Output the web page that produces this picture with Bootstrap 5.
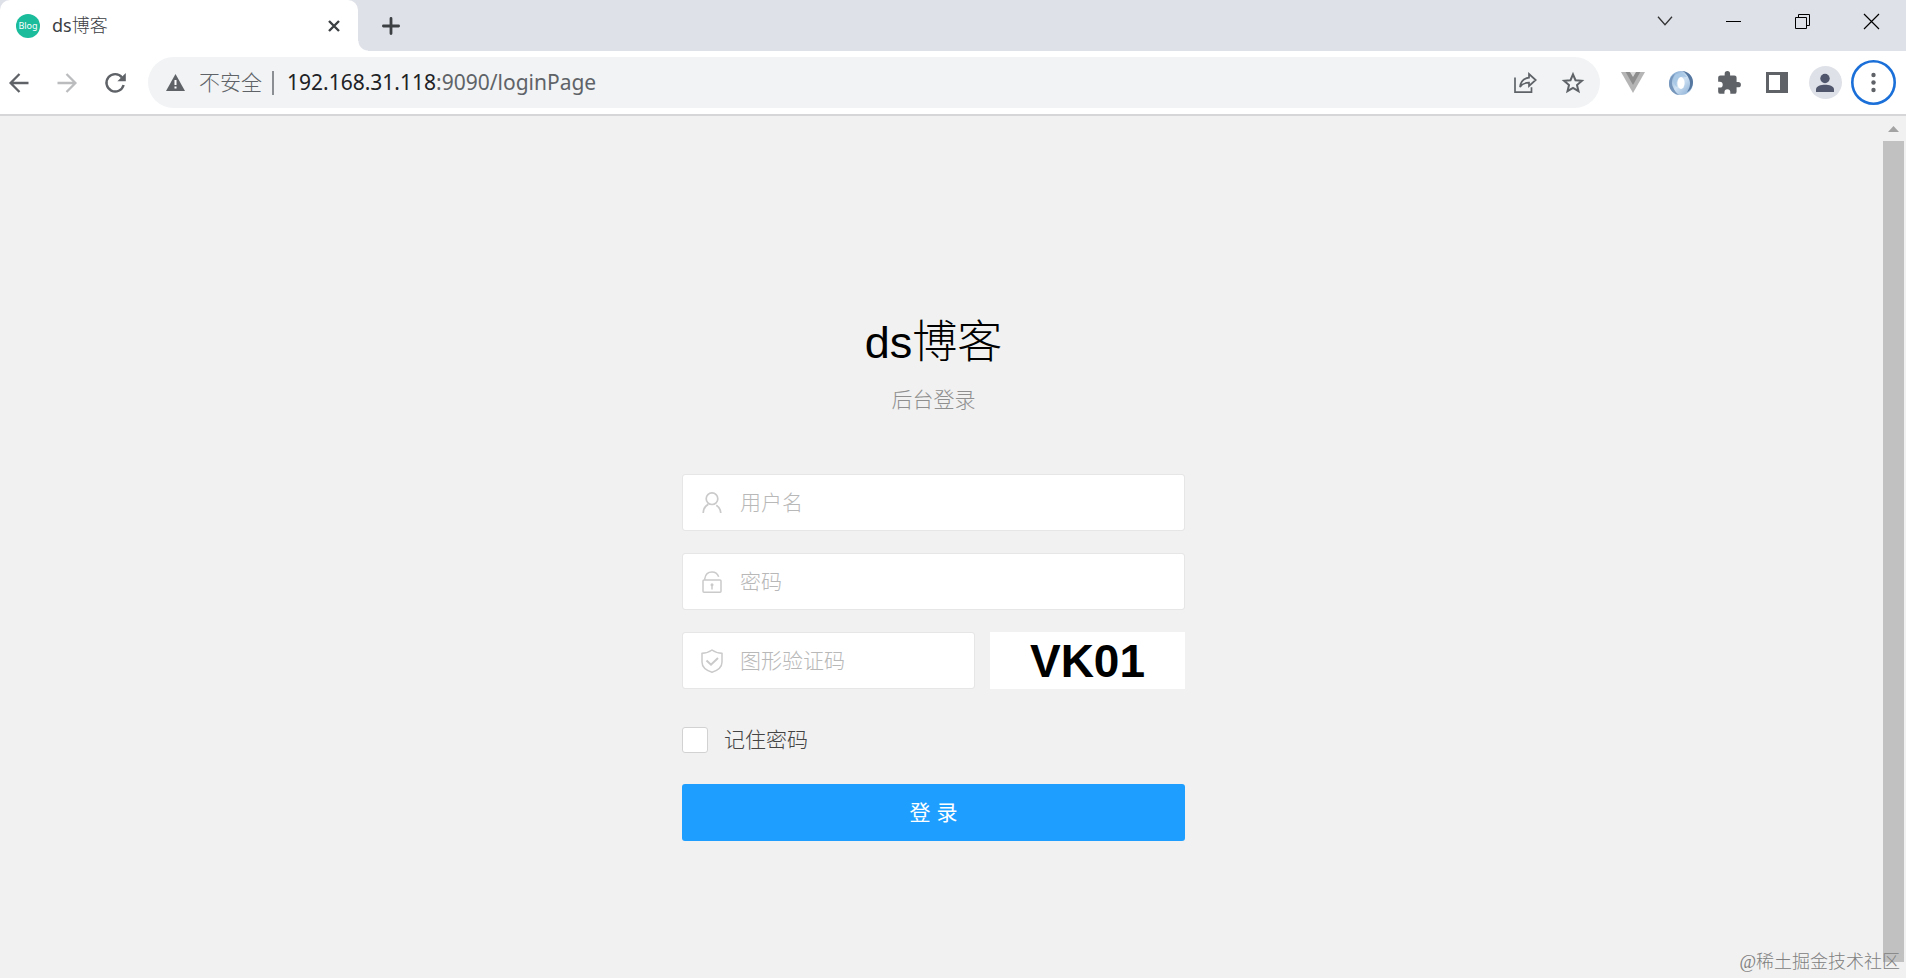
<!DOCTYPE html>
<html lang="zh-CN">
<head>
<meta charset="utf-8">
<meta name="viewport" content="width=device-width, initial-scale=1">
<title>ds博客</title>
<link href="https://cdn.jsdelivr.net/npm/bootstrap@5.3.0/dist/css/bootstrap.min.css" rel="stylesheet">
<style>
  body { font-family: "Liberation Sans", "Noto Sans CJK SC", sans-serif; font-weight: 300; background: #f1f1f1; }
  svg { display: block; flex: none; overflow: visible; }
  .ui-font { font-family: "Noto Sans", "Noto Sans CJK SC", sans-serif; font-weight: 400; }
  .bare { border: 0; padding: 0; background: none; display: flex; align-items: center; justify-content: center; flex: none; }

  .tab-strip { height: 51px; background: #dee1e8; }
  .page-tab { width: 358px; padding: 0 12px 0 16px; background: #fff; border-radius: 10px 10px 0 0; color: #3c4043; font-size: 18px; }
  .tab-flare { width: 10px; height: 10px; background: radial-gradient(circle at 100% 0, transparent 9px, #fff 10px); }
  .tab-close { width: 24px; height: 24px; }
  .new-tab { width: 46px; height: 51px; }
  .win-btn { width: 69px; height: 42px; }

  .tool-row { height: 65px; padding-right: 14px; background: #fff; border-bottom: 2px solid #d6d6d8; }
  .tool-gap { gap: 10px; }
  .tool-btn { width: 38px; height: 38px; }
  .address { height: 51px; margin: 0 14px; padding: 0 8px 0 18px; border-radius: 26px; background: #f1f3f4; font-size: 21px; color: #5f6368; }
  .site-state { margin-left: 14px; font-weight: 300; }
  .divider { width: 2px; height: 24px; margin: 0 13px 0 10px; background: #8b8e92; }
  .host { color: #202124; }
  .profile { width: 33px; height: 33px; border-radius: 50%; background: #dee1e8; }

  .login-box { width: 503px; margin-top: 199px; }
  .login-title { font-size: 45px; line-height: 56px; font-weight: 300; color: #000; margin-bottom: 13px; }
  .login-sub { font-size: 21px; line-height: 32px; color: #8f8f8f; margin-bottom: 58px; }
  .field { margin-bottom: 22px; }
  .field-icon { top: 0; left: 0; width: 60px; height: 57px; color: #cacaca; }
  .field .form-control { height: 57px; padding: 0 12px 0 57px; font-size: 21px; font-weight: 300; border-color: #e6e6e6; border-radius: 3px; }
  .field .form-control::placeholder { color: #b8b8b8; }
  .captcha-row { gap: 15px; }
  .captcha { width: 195px; height: 57px; background: #fff; color: #000; font-size: 46px; line-height: 1; font-weight: 700; }
  .remember { gap: 16px; margin: 35px 0 28px; font-size: 21px; line-height: 32px; color: #444; }
  .remember .form-check-input { width: 26px; height: 26px; margin: 0; border-color: #d2d2d2; border-radius: 3px; }
  .login-btn { height: 57px; font-size: 21px; font-weight: 400; color: #fff; background: #1e9fff; border: 0; border-radius: 3px; }
  .login-btn:hover { background: #4bb2ff; color: #fff; }

  .scroll-rail { width: 39px; padding: 10px 2px 16px 16px; }
  .scroll-thumb { width: 21px; margin-top: 9px; background: #c1c1c1; }
  .watermark { right: 6px; bottom: 4px; font-family: "Liberation Serif", "Noto Sans CJK SC", serif; font-size: 18px; line-height: 24px; color: #808080; }
</style>
</head>
<body class="min-vh-100 d-flex flex-column">

<header class="ui-font">
  <div class="tab-strip d-flex align-items-end">
    <div class="page-tab h-100 d-flex align-items-center">
      <svg width="24" height="24" viewBox="0 0 24 24"><circle cx="12" cy="12" r="12" fill="#1abc9c"/><text x="12" y="15" text-anchor="middle" font-size="9" fill="#fff">Blog</text></svg>
      <span class="flex-grow-1 ms-2 ps-1">ds<span class="fw-light">博客</span></span>
      <button class="bare tab-close" type="button" aria-label="关闭标签页"><svg width="12" height="12" viewBox="0 0 12 12" stroke="#3c4043" stroke-width="2.4"><path d="M1 1l10 10M11 1L1 11"/></svg></button>
    </div>
    <span class="tab-flare"></span>
    <button class="bare new-tab" type="button" aria-label="新标签页"><svg width="18" height="18" viewBox="0 0 18 18" stroke="#3c4043" stroke-width="2.8" stroke-linecap="round"><path d="M9 1.4v15.2M1.4 9h15.2"/></svg></button>
    <div class="ms-auto align-self-start d-flex">
      <button class="bare win-btn" type="button" aria-label="搜索标签页"><svg width="16" height="10" viewBox="0 0 16 10" fill="none" stroke="#333" stroke-width="1.3"><path d="M1 .8l7 8 7-8"/></svg></button>
      <button class="bare win-btn" type="button" aria-label="最小化"><svg width="15" height="1" viewBox="0 0 15 1"><path d="M0 0h15v1H0z"/></svg></button>
      <button class="bare win-btn" type="button" aria-label="还原"><svg width="15" height="15" viewBox="0 0 15 15" fill="none" stroke="#000"><path d="M.5 3.5h11v11H.5zM3.5 3.5v-3h11v11h-3"/></svg></button>
      <button class="bare win-btn" type="button" aria-label="关闭"><svg width="15" height="15" viewBox="0 0 15 15" stroke="#000" stroke-width="1.2"><path d="M0 0l15 15M15 0L0 15"/></svg></button>
    </div>
  </div>

  <div class="tool-row d-flex align-items-center">
    <div class="d-flex tool-gap">
      <button class="bare tool-btn" type="button" aria-label="后退"><svg width="20" height="20" viewBox="0 0 20 20" fill="none" stroke="#5f6368" stroke-width="2.3"><path d="M19.5 10H2M10.5 1L1.6 10l8.9 9"/></svg></button>
      <button class="bare tool-btn" type="button" aria-label="前进"><svg width="20" height="20" viewBox="0 0 20 20" fill="none" stroke="#babcbe" stroke-width="2.3"><path d="M.5 10H18M9.5 1l8.9 9-8.9 9"/></svg></button>
      <button class="bare tool-btn" type="button" aria-label="重新加载"><svg width="21" height="20" viewBox="0 0 21 20" fill="none" stroke="#5f6368" stroke-width="2.4"><path d="M17 4.4A8.7 8.7 0 1 0 18.6 12"/><path d="M20.8 0v8.2h-8.4z" fill="#5f6368" stroke="none"/></svg></button>
    </div>

    <div class="address d-flex align-items-center flex-grow-1">
      <svg width="19" height="17" viewBox="0 0 19 17"><path d="M9.500 0L19 17H0z" fill="#5f6368"/><path d="M8.500 6h2v5h-2zM8.500 12.500h2v2h-2z" fill="#fff"/></svg>
      <span class="site-state">不安全</span>
      <span class="divider"></span>
      <span class="flex-grow-1"><span class="host">192.168.31.118</span>:9090/loginPage</span>
      <div class="d-flex tool-gap">
        <button class="bare tool-btn" type="button" aria-label="分享"><svg width="23" height="20" viewBox="0 0 23 20" fill="none" stroke="#5f6368" stroke-width="1.7"><path d="M1 4.500v14.700h16.500v-5M15 1l6.700 6-6.700 6V9.700c-4 0-7 1.300-9 4.300.6-5 3.600-8.600 9-9.300z"/></svg></button>
        <button class="bare tool-btn" type="button" aria-label="收藏"><svg width="22" height="21" viewBox="0 0 22 21" fill="none" stroke="#5f6368" stroke-width="2"><path d="M11 2.300l2.500 5.900 6.400.6-4.900 4.200 1.500 6.200-5.500-3.300-5.500 3.300L7 13 2.100 8.800l6.400-.6z"/></svg></button>
      </div>
    </div>

    <div class="d-flex tool-gap">
      <button class="bare tool-btn" type="button" aria-label="Vue"><svg width="24" height="21" viewBox="0 0 24 21"><path d="M0 0h24L12 21z" fill="#b5b5b5"/><path d="M4.700 0h14.600L12 13z" fill="#8d8d8d"/><path d="M9 0h6l-3 5z" fill="#d8d8d8"/></svg></button>
      <button class="bare tool-btn" type="button" aria-label="JSON"><svg width="24" height="24" viewBox="0 0 24 24">
        <defs><linearGradient id="ringA" x1="0" y1="0" x2="1" y2="1"><stop offset="0" stop-color="#6f9bc9"/><stop offset=".5" stop-color="#cfe2f4"/><stop offset="1" stop-color="#7fa6d0"/></linearGradient></defs>
        <circle cx="12" cy="12" r="12" fill="url(#ringA)"/>
        <path d="M13 0c6 0 11 5 11 11 0 5-3 9-6 10 3-4 4-9 2-13C18.500 4 16 1 13 0z" fill="#56779f"/>
        <path d="M11 24C5 24 0 19 0 13 0 8 3 4 6 3 3 7 2 12 4 16c1.500 4 4 7 7 8z" fill="#7796bb"/>
        <path d="M6 4c4-3 9-2 12 2-4-1-7-1-9 2-1.500 2-2 4-1 8-4-3-4.500-8-2-12z" fill="#a9c8e6"/>
        <ellipse cx="12" cy="12" rx="3.600" ry="6" fill="#fff"/></svg></button>
      <button class="bare tool-btn" type="button" aria-label="扩展程序"><svg width="26" height="26" viewBox="0 0 24 24" fill="#5f6368"><path d="M20.500 11H19V7a2 2 0 0 0-2-2h-4V3.500a2.500 2.500 0 0 0-5 0V5H4a2 2 0 0 0-2 2v3.800h1.500a2.700 2.700 0 0 1 0 5.400H2V20a2 2 0 0 0 2 2h3.800v-1.500a2.700 2.700 0 0 1 5.400 0V22H17a2 2 0 0 0 2-2v-4h1.500a2.500 2.500 0 0 0 0-5z"/></svg></button>
      <button class="bare tool-btn" type="button" aria-label="侧边栏"><svg width="22" height="21" viewBox="0 0 22 21"><path d="M0 0h22v21H0z" fill="#5f6368"/><path d="M3 3h11v15H3z" fill="#fff"/></svg></button>
      <button class="bare tool-btn" type="button" aria-label="用户"><span class="profile d-flex align-items-center justify-content-center"><svg width="20" height="20" viewBox="0 0 20 20" fill="#50566b"><circle cx="10" cy="5.500" r="4.700"/><path d="M1 19v-2.500C1 13 6 11.800 10 11.800s9 1.200 9 4.700V19z"/></svg></span></button>
      <button class="bare tool-btn" type="button" aria-label="菜单"><svg width="45" height="45" viewBox="0 0 45 45" fill="#5f6368"><circle cx="22.500" cy="22.500" r="21.200" fill="none" stroke="#1a6fd8" stroke-width="2.600"/><circle cx="22.500" cy="15" r="2.200"/><circle cx="22.500" cy="22.500" r="2.200"/><circle cx="22.500" cy="30" r="2.200"/></svg></button>
    </div>
  </div>
</header>

<main class="d-flex flex-grow-1 position-relative">
  <div class="flex-grow-1 d-flex justify-content-center">
    <form class="login-box">
      <h1 class="login-title text-center">ds博客</h1>
      <p class="login-sub text-center">后台登录</p>

      <div class="field position-relative">
        <label class="field-icon position-absolute d-flex align-items-center justify-content-center" for="username" aria-label="用户名"><svg width="20" height="21" viewBox="0 0 20 21" fill="none" stroke="currentColor" stroke-width="1.700"><circle cx="10" cy="6.700" r="5.800"/><path d="M1.200 21c0-4 2-7 5.200-8.800M14.300 13.200c2.800 1.800 4.300 4.500 4.500 7.800"/></svg></label>
        <input class="form-control" id="username" type="text" placeholder="用户名">
      </div>
      <div class="field position-relative">
        <label class="field-icon position-absolute d-flex align-items-center justify-content-center" for="password" aria-label="密码"><svg width="20" height="22" viewBox="0 0 20 22" fill="none" stroke="currentColor" stroke-width="1.500"><rect x="1" y="9" width="18" height="12.200" rx="1"/><path d="M2.800 9V7.500C3.500 3 6.500.9 10 .9c3 0 5.500 1.600 6.700 4.800M10 14v4.500"/><circle cx="10" cy="13.700" r="1.500" fill="currentColor" stroke="none"/></svg></label>
        <input class="form-control" id="password" type="password" placeholder="密码">
      </div>
      <div class="captcha-row d-flex">
        <div class="field position-relative flex-grow-1 mb-0">
          <label class="field-icon position-absolute d-flex align-items-center justify-content-center" for="vercode" aria-label="图形验证码"><svg width="22" height="24" viewBox="0 0 22 24" fill="none" stroke="currentColor" stroke-width="1.500"><path d="M11 1c3 2.200 6.500 3.200 10 3.200V13c0 5-4.500 8.500-10 10.200C5.500 21.500 1 18 1 13V4.200C4.500 4.200 8 3.200 11 1z" stroke-linejoin="round"/><path d="M5.500 11.500l4.500 4.200 7-6.700" stroke-width="2"/></svg></label>
          <input class="form-control" id="vercode" type="text" placeholder="图形验证码">
        </div>
        <div class="captcha flex-shrink-0 d-flex align-items-center justify-content-center">VK01</div>
      </div>

      <div class="remember d-flex align-items-center">
        <input class="form-check-input" id="remember" type="checkbox">
        <label for="remember">记住密码</label>
      </div>
      <button class="btn login-btn w-100" type="button">登 录</button>
    </form>
  </div>

  <div class="scroll-rail d-flex flex-column align-items-center">
    <svg width="11" height="6" viewBox="0 0 11 6"><path d="M5.500 0L11 6H0z" fill="#a3a3a3"/></svg>
    <div class="scroll-thumb flex-grow-1"></div>
  </div>
  <div class="watermark position-absolute">@稀土掘金技术社区</div>
</main>

<script src="https://cdn.jsdelivr.net/npm/bootstrap@5.3.0/dist/js/bootstrap.bundle.min.js"></script>
</body>
</html>
